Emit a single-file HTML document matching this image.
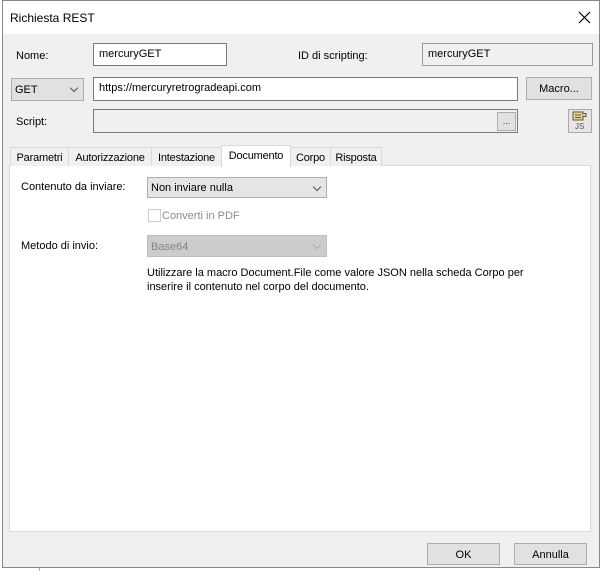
<!DOCTYPE html>
<html><head><style>
*{box-sizing:border-box;margin:0;padding:0}
body{width:602px;height:571px;background:#fff;font-family:"Liberation Sans",sans-serif;font-size:11px;color:#000;position:relative;overflow:hidden}
.a{position:absolute}
.win{left:2px;top:0;width:598px;height:568px;border:1px solid #888;background:#f0f0f0}
.title{left:3px;top:1px;width:596px;height:33px;background:#fff}
.inp{background:#fff;border:1px solid #7a7a7a;padding:4px 5px;white-space:nowrap}
.btn{background:#e1e1e1;border:1px solid #adadad;text-align:center}
.lbl{white-space:nowrap}
.tab{top:147px;height:19px;border:1px solid #d9d9d9;border-bottom:none;background:#f0f0f0;text-align:center;padding-top:4px;letter-spacing:-0.2px}
.chev{position:absolute;right:6px;top:6px;width:6px;height:6px;border-right:1px solid #555;border-bottom:1px solid #555;transform:rotate(45deg)}
</style></head><body>
<div class="a win"></div>
<div class="a title"></div>
<div class="a lbl" style="left:10px;top:11px;font-size:12px">Richiesta REST</div>
<svg class="a" style="left:578px;top:11px" width="13" height="13"><path d="M1 1L12 12M12 1L1 12" stroke="#000" stroke-width="1.2"/></svg>

<div class="a lbl" style="left:16px;top:50px">Nome:</div>
<div class="a inp" style="left:93px;top:43px;width:134px;height:23px">mercuryGET</div>
<div class="a lbl" style="left:298px;top:50px">ID di scripting:</div>
<div class="a inp" style="left:422px;top:43px;width:171px;height:23px;background:#f0f0f0;border-color:#9a9a9a">mercuryGET</div>

<div class="a btn" style="left:11px;top:78px;width:73px;height:23px;text-align:left;padding:5px 3px">GET<div class="chev"></div></div>
<div class="a inp" style="left:93px;top:77px;width:425px;height:24px">https://mercuryretrogradeapi.com</div>
<div class="a btn" style="left:526px;top:77px;width:66px;height:23px;padding-top:5px">Macro...</div>

<div class="a lbl" style="left:16px;top:116px">Script:</div>
<div class="a inp" style="left:93px;top:109px;width:425px;height:24px;background:#f0f0f0"></div>
<div class="a btn" style="left:497px;top:112px;width:19px;height:19px;font-size:9px;padding-top:3px;color:#606">...</div>
<div class="a btn" style="left:568px;top:109px;width:24px;height:24px;background:#e6e6e6;border-color:#aaa">
<svg width="22" height="22"><rect x="4" y="2" width="10" height="8" fill="#f5d77a" stroke="#555"/><path d="M14 3.5h3v3h-3" fill="#f5d77a" stroke="#555"/><path d="M6 5h6M6 7.5h6" stroke="#555"/><text x="6" y="19" font-size="8" font-family="Liberation Sans" fill="#555">JS</text></svg></div>

<div class="a" style="left:9px;top:165px;width:582px;height:367px;background:#fff;border:1px solid #d9d9d9"></div>
<div class="a tab" style="left:10px;width:59px">Parametri</div>
<div class="a tab" style="left:68px;width:84px">Autorizzazione</div>
<div class="a tab" style="left:151px;width:71px">Intestazione</div>
<div class="a tab" style="left:221px;top:145px;height:22px;width:70px;background:#fff;padding-top:4px">Documento</div>
<div class="a tab" style="left:290px;width:41px">Corpo</div>
<div class="a tab" style="left:330px;width:52px">Risposta</div>

<div class="a lbl" style="left:21px;top:181px">Contenuto da inviare:</div>
<div class="a btn" style="left:147px;top:177px;width:180px;height:21px;text-align:left;padding:4px 3px;background:#e5e5e5">Non inviare nulla<div class="chev"></div></div>
<div class="a" style="left:148px;top:209px;width:13px;height:13px;border:1px solid #ccc;background:#fff"></div>
<div class="a lbl" style="left:162px;top:210px;color:#8d8d8d">Converti in PDF</div>
<div class="a lbl" style="left:21px;top:240px">Metodo di invio:</div>
<div class="a btn" style="left:147px;top:235px;width:180px;height:22px;text-align:left;padding:5px 3px;background:#ccc;border-color:#bfbfbf;color:#838383">Base64<div class="chev" style="border-color:#aaa"></div></div>
<div class="a lbl" style="left:147px;top:266px;line-height:14px">Utilizzare la macro Document.File come valore JSON nella scheda Corpo per<br>inserire il contenuto nel corpo del documento.</div>

<div class="a btn" style="left:427px;top:543px;width:73px;height:22px;padding-top:5px">OK</div>
<div class="a btn" style="left:514px;top:543px;width:73px;height:22px;padding-top:5px">Annulla</div>
<div class="a" style="left:39px;top:568px;width:1px;height:3px;background:#aaa"></div>
</body></html>
